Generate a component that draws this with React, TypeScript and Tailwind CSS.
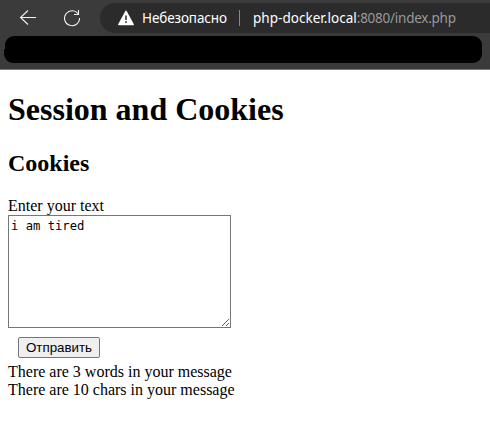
function BackIcon() {
  return (
    <svg className="h-6 w-6" viewBox="0 0 24 24" fill="none" stroke="#f1f1f1" strokeWidth="1.1">
      <path d="M20 11.500H4.500M12 4.500 4.500 11.500l7.500 7" />
    </svg>
  );
}

function ReloadIcon() {
  return (
    <svg className="h-6 w-6" viewBox="0 0 24 24" fill="none" stroke="#f1f1f1" strokeWidth="1.1">
      <path d="M18.500 8.500A7.500 7.500 0 1 0 19.500 12" />
      <path d="M18.500 4v4.500H14" />
    </svg>
  );
}

function WarningIcon() {
  return (
    <svg className="h-4 w-4" viewBox="0 0 16 16">
      <path d="M8 1.300 15.200 14.500H.8Z" fill="#fff" stroke="#fff" strokeWidth="1.500" strokeLinejoin="round" />
      <path d="M8 5.500v4.500M8 11.300v1.700" stroke="#2b2b2b" strokeWidth="1.500" />
    </svg>
  );
}

function BrowserBar() {
  return (
    <header className="h-[70px] border-b border-[#777] bg-[#3b3b3b] pt-[3px]">
      <div className="flex h-[30px] items-center">
        <div className="ml-4"><BackIcon /></div>
        <div className="ml-[20px]"><ReloadIcon /></div>
        <div className="ml-4 flex h-[30px] flex-1 items-center rounded-l-full bg-[#2b2b2b] pl-[18px] font-['Noto_Sans',sans-serif] text-[13.5px] whitespace-nowrap text-white">
          <WarningIcon />
          <span className="ml-2 w-[97px] tracking-[-0.12px]">Небезопасно</span>
          <span className="h-4 w-px bg-[#888]" />
          <span className="ml-[13px] tracking-[0.03px]">php-docker.local<span className="tracking-[-0.25px] text-[#999]">:8080/index.php</span></span>
        </div>
      </div>
      <div className="mt-[3px] ml-1 h-[27px] w-[478px]">
        <div className="ml-px h-[15px] rounded-t-[9px] rounded-b-[3px] bg-black" />
        <div className="-mt-[3px] h-[15px] rounded-t-[3px] rounded-b-[9px] bg-black" />
      </div>
    </header>
  );
}

export default function App() {
  return (
    <div className="h-[424px] overflow-hidden bg-white font-['Liberation_Serif',serif] text-base leading-[18px] text-black">
      <BrowserBar />
      <main className="px-2 pt-[21px]">
        <h1 className="text-[32px] leading-[37px] font-bold">Session and Cookies</h1>
        <h2 className="mt-[21px] text-2xl leading-[28px] font-bold">Cookies</h2>
        <form className="mt-5">
          <label className="block" htmlFor="message">Enter your text</label>
          <textarea
            id="message"
            spellCheck={false}
            className="block h-[113px] w-[223px] border border-[#767676] bg-white p-0.5 font-['DejaVu_Sans_Mono',monospace] text-[12.2px] leading-[16px]"
            defaultValue="i am tired"
          />
          <button type="button" className="mt-[9px] ml-2.5 block h-[21px] w-[82px] rounded-[2px] border border-[#767676] bg-[#efefef] font-['Liberation_Sans',sans-serif] text-[13.333px] leading-[15px]">
            Отправить
          </button>
        </form>
        <p className="mt-[5px]">There are 3 words in your message</p>
        <p>There are 10 chars in your message</p>
      </main>
    </div>
  );
}
